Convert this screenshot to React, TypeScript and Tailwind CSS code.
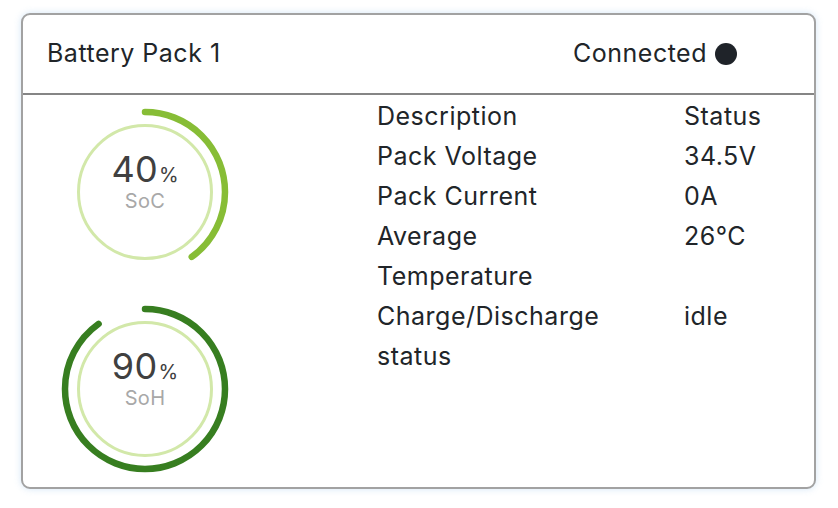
import React from 'react';

interface GaugeProps {
  value: number;
  label: string;
  color: string;
}

const SIZE = 176;
const C = SIZE / 2;
const R_OUT = 80;
const R_IN = 66.5;

function Gauge({ value, label, color }: GaugeProps) {
  const circumference = 2 * Math.PI * R_OUT;
  const dash = (value / 100) * circumference;

  return (
    <div className="relative w-[176px] h-[176px]">
      <svg width={SIZE} height={SIZE} viewBox={`0 0 ${SIZE} ${SIZE}`}>
        <circle cx={C} cy={C} r={R_IN} fill="none" stroke="#d2e8a9" strokeWidth={3} />
        <circle
          cx={C}
          cy={C}
          r={R_OUT}
          fill="none"
          stroke={color}
          strokeWidth={6.5}
          strokeLinecap="round"
          strokeDasharray={`${dash} ${circumference}`}
          transform={`rotate(-90 ${C} ${C})`}
        />
      </svg>
      <div className="absolute inset-0 flex flex-col items-center justify-center pb-[22px]">
        <div className="flex items-baseline text-[#404040] leading-none">
          <span className="text-[36px] leading-[34px] tracking-[0.3px]">{value}</span>
          <span className="text-[20px] leading-[20px] ml-[1px]">%</span>
        </div>
        <span className="mt-[6px] text-[20px] leading-[18px] text-[#a8a8a8] tracking-[0.3px]">{label}</span>
      </div>
    </div>
  );
}

const rows: [string, string][] = [
  ['Description', 'Status'],
  ['Pack Voltage', '34.5V'],
  ['Pack Current', '0A'],
  ['Average Temperature', '26°C'],
  ['Charge/Discharge status', 'idle'],
];

export default function App() {
  return (
    <div className="min-h-[508px] bg-white pt-[13px] pl-[21px] font-['Inter',sans-serif]">
      <div className="w-[795px] h-[476px] border-2 border-[#a2a2a2] rounded-[9px] shadow-[0_0_7px_rgba(160,200,235,0.45)] flex flex-col bg-white">
        <div className="h-[80px] shrink-0 border-b-2 border-[#858585] flex items-center justify-between pl-[24px] pr-[77px] text-[25px] tracking-[0.5px] text-[#212529]">
          <span>Battery Pack 1</span>
          <span className="flex items-center">
            Connected
            <span className="ml-[8px] inline-block w-[22px] h-[22px] rounded-full bg-[#1f2329]" />
          </span>
        </div>
        <div className="flex flex-1">
          <div className="w-[244px] flex flex-col items-center pt-[9px] gap-[21px]">
            <Gauge value={40} label="SoC" color="#87bd36" />
            <Gauge value={90} label="SoH" color="#377e20" />
          </div>
          <div className="pl-[110px] pt-[1px]">
            <div className="grid grid-cols-[307px_auto] text-[25px] tracking-[0.5px] leading-[40px] text-[#212529]">
              {rows.map(([desc, status]) => (
                <React.Fragment key={desc}>
                  <div className="w-[240px]">{desc}</div>
                  <div>{status}</div>
                </React.Fragment>
              ))}
            </div>
          </div>
        </div>
      </div>
    </div>
  );
}
